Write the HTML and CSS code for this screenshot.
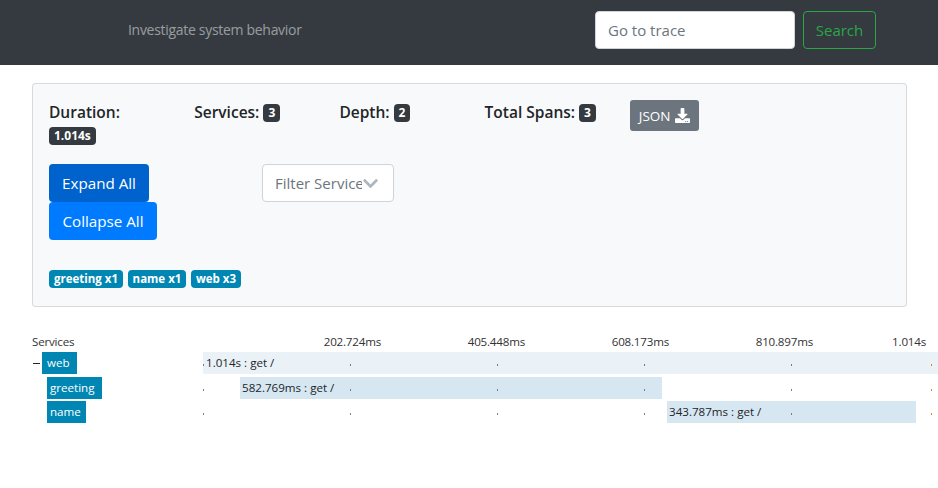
FILE: index.html
```html
<!DOCTYPE html>
<html lang="en">
<head>
  <meta charset="UTF-8" />
  <title>Trace</title>
  <link rel="stylesheet" href="styles.css">
</head>
<body>
  <header class="navbar">
    <span class="tagline">Investigate system behavior</span>
    <form class="search-form">
      <input class="trace-input" type="text" placeholder="Go to trace" />
      <button class="btn-search" type="button">Search</button>
    </form>
  </header>

  <section class="summary">
    <div class="stats">
      <div class="stat">Duration:<br><span class="badge-dark">1.014s</span></div>
      <div class="stat">Services: <span class="badge-dark">3</span></div>
      <div class="stat">Depth: <span class="badge-dark">2</span></div>
      <div class="stat">Total Spans: <span class="badge-dark">3</span></div>
      <div>
        <button class="btn-json" type="button">JSON
          <svg class="icon-download" viewBox="0 0 512 512"><path fill="currentColor" d="M216 0h80c13.3 0 24 10.7 24 24v168h87.7c17.8 0 26.7 21.5 14.1 34.1L269.7 378.3c-7.5 7.5-19.8 7.5-27.3 0L90.1 226.1c-12.6-12.6-3.7-34.1 14.1-34.1H192V24c0-13.3 10.7-24 24-24zm296 376v112c0 13.3-10.7 24-24 24H24c-13.3 0-24-10.7-24-24V376c0-13.3 10.7-24 24-24h146.7l49 49c20.1 20.1 52.5 20.1 72.6 0l49-49H488c13.3 0 24 10.7 24 24zm-124 88c0-11-9-20-20-20s-20 9-20 20 9 20 20 20 20-9 20-20zm64 0c0-11-9-20-20-20s-20 9-20 20 9 20 20 20 20-9 20-20z"/></svg>
        </button>
      </div>
    </div>

    <div class="controls">
      <div class="btn-stack">
        <button class="btn-expand" type="button">Expand All</button>
        <button class="btn-collapse" type="button">Collapse All</button>
      </div>
      <div class="filter">
        <span class="filter-text">Filter Services</span>
        <svg class="icon-chevron" viewBox="0 0 448 512"><path fill="currentColor" d="M207.029 381.476L12.686 187.132c-9.373-9.373-9.373-24.569 0-33.941l22.667-22.667c9.357-9.357 24.522-9.375 33.901-.04L224 284.505l154.745-154.021c9.379-9.335 24.544-9.317 33.901.04l22.667 22.667c9.373 9.373 9.373 24.569 0 33.941L240.971 381.476c-9.373 9.372-24.569 9.372-33.942 0z"/></svg>
      </div>
    </div>

    <div class="service-tags">
      <span class="tag">greeting x1</span>
      <span class="tag">name x1</span>
      <span class="tag">web x3</span>
    </div>
  </section>

  <section class="timeline">
    <div class="axis">
      <span class="axis-title">Services</span>
      <span>202.724ms</span>
      <span>405.448ms</span>
      <span>608.173ms</span>
      <span>810.897ms</span>
      <span>1.014s</span>
    </div>

    <div class="row">
      <div class="row-label"><span class="toggle"></span><span class="service">web</span></div>
      <div class="track">
        <div class="bar bar-root" style="left: 0; width: 735px">1.014s : get /</div>
        <i class="dot" style="left: 0"></i><i class="dot" style="left: 147px"></i><i class="dot" style="left: 294px"></i><i class="dot" style="left: 441px"></i><i class="dot" style="left: 588px"></i><i class="dot dot-end" style="left: 728px"></i>
      </div>
    </div>
    <div class="row">
      <div class="row-label child"><span class="service">greeting</span></div>
      <div class="track">
        <div class="bar" style="left: 37px; width: 422px">582.769ms : get /</div>
        <i class="dot" style="left: 0"></i><i class="dot" style="left: 147px"></i><i class="dot" style="left: 294px"></i><i class="dot" style="left: 441px"></i><i class="dot" style="left: 588px"></i><i class="dot dot-end" style="left: 728px"></i>
      </div>
    </div>
    <div class="row">
      <div class="row-label child"><span class="service service-name">name</span></div>
      <div class="track">
        <div class="bar" style="left: 464px; width: 249px">343.787ms : get /</div>
        <i class="dot" style="left: 0"></i><i class="dot" style="left: 147px"></i><i class="dot" style="left: 294px"></i><i class="dot" style="left: 441px"></i><i class="dot" style="left: 588px"></i><i class="dot dot-end" style="left: 728px"></i>
      </div>
    </div>
  </section>
</body>
</html>
```

FILE: styles.css
```css
* { box-sizing: border-box; }
body {
  margin: 0;
  background: #fff;
  color: #212529;
  font-family: "Open Sans", "Noto Sans", sans-serif;
  overflow-x: hidden;
}
button {
  font-family: inherit;
  border: none;
  cursor: pointer;
}
.navbar {
  height: 65px;
  background: #343a40;
  display: flex;
  align-items: center;
  justify-content: space-between;
  padding: 0 62px 5px 128px;
}
.tagline {
  margin-bottom: 2px;
  color: rgba(255, 255, 255, 0.5);
  font-size: 14px;
  letter-spacing: -0.3px;
}
.search-form {
  display: flex;
  gap: 8px;
}
.trace-input {
  width: 200px;
  height: 38px;
  padding: 0 12px;
  border: 1px solid #ced4da;
  border-radius: 4px;
  font-family: inherit;
  font-size: 15px;
}
.trace-input::placeholder {
  color: #6c757d;
  opacity: 1;
}
.btn-search {
  width: 73px;
  height: 38px;
  padding: 0;
  background: transparent;
  border: 1px solid #28a745;
  border-radius: 4px;
  color: #28a745;
  font-size: 15px;
}
.summary {
  margin: 18px 31px 0 32px;
  height: 224px;
  padding: 16px;
  background: #f8f9fa;
  border: 1px solid rgba(0, 0, 0, 0.125);
  border-radius: 4px;
}
.stats {
  display: grid;
  grid-template-columns: repeat(5, 145.2px);
  height: 64px;
}
.stat {
  font-size: 15.5px;
  font-weight: 600;
  line-height: 23px;
  padding-top: 1px;
}
.badge-dark {
  display: inline-block;
  height: 18px;
  padding: 0 5px;
  background: #343a40;
  border-radius: 4px;
  color: #fff;
  font-size: 12px;
  font-weight: 700;
  line-height: 18px;
  vertical-align: 1px;
}
.btn-json {
  display: flex;
  align-items: center;
  gap: 5px;
  width: 69px;
  height: 31px;
  padding: 0 8px 0 9px;
  background: #6c757d;
  border-radius: 3px;
  color: #fff;
  font-size: 13.5px;
}
.icon-download {
  width: 15px;
  height: 15px;
}
.controls {
  display: grid;
  grid-template-columns: 213px 132px;
  align-items: start;
  height: 106px;
}
.btn-stack {
  display: flex;
  flex-direction: column;
  align-items: flex-start;
}
.btn-expand, .btn-collapse {
  height: 38px;
  padding: 0;
  border-radius: 4px;
  color: #fff;
  font-size: 15.2px;
}
.btn-expand { background: #0062cc; width: 100px; }
.btn-collapse { background: #007bff; width: 108px; }
.filter {
  display: flex;
  align-items: center;
  height: 38px;
  padding: 0 0 0 12px;
  background: #fff;
  border: 1px solid #ced4da;
  border-radius: 4px;
  color: #6c757d;
  font-size: 15px;
}
.filter-text {
  width: 87px;
  overflow: hidden;
  white-space: nowrap;
  flex: none;
}
.icon-chevron {
  width: 15px;
  height: 17px;
  margin-left: 1px;
  color: #adb5bd;
}
.service-tags {
  display: flex;
  gap: 4.5px;
}
.tag {
  height: 18px;
  padding: 0 5px;
  background: #0086b3;
  border-radius: 4px;
  color: #fff;
  font-size: 11.5px;
  font-weight: 700;
  line-height: 18px;
  white-space: nowrap;
}
.timeline {
  margin: 26px 0 0 32px;
  font-size: 11.6px;
}
.axis {
  display: grid;
  grid-template-columns: 171px 178px 144px 144px 144px 113px;
  height: 18px;
  margin-bottom: 1.3px;
  text-align: right;
  line-height: 18px;
  color: #333;
  letter-spacing: -0.2px;
}
.axis-title { text-align: left; }
.row {
  display: flex;
  height: 24.5px;
}
.row-label {
  width: 171px;
  flex: none;
  display: flex;
  align-items: flex-start;
}
.row-label.child { padding-left: 15px; }
/* collapse marker, a plain dash */
.toggle {
  width: 7px;
  height: 1px;
  margin: 11px 2px 0 1px;
  background: #212529;
}
.service {
  height: 22px;
  padding: 0 7px 0 3px;
  background: #0086b3;
  color: #fff;
  line-height: 22px;
}
.service-name { padding-right: 5px; }
.row-label:not(.child) .service { padding: 0 7px 0 5px; }
.track {
  position: relative;
  width: 735px;
  height: 22px;
}
.bar {
  position: absolute;
  top: 0;
  height: 22px;
  padding-left: 2px;
  background: #d7e7f2;
  line-height: 22px;
  white-space: nowrap;
}
.bar-root {
  background: #eaf2f8;
  padding-left: 3px;
}
.dot {
  position: absolute;
  top: 12px;
  width: 1px;
  height: 2px;
  background: #7a7a8c;
}
.dot-end { background: #c98a3c; }
```
